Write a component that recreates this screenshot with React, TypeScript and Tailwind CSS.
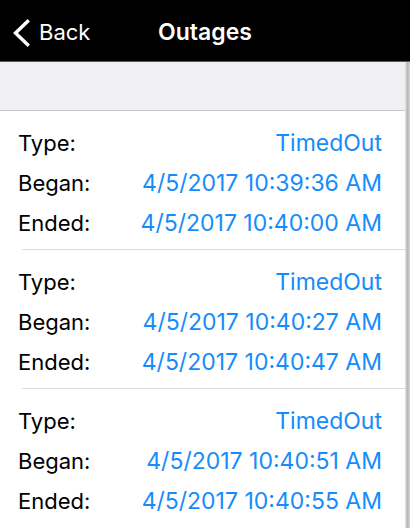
import React from "react";

const groups = [
  { type: "TimedOut", began: "4/5/2017 10:39:36 AM", ended: "4/5/2017 10:40:00 AM" },
  { type: "TimedOut", began: "4/5/2017 10:40:27 AM", ended: "4/5/2017 10:40:47 AM" },
  { type: "TimedOut", began: "4/5/2017 10:40:51 AM", ended: "4/5/2017 10:40:55 AM" },
];

function Row({ label, value }: { label: string; value: string }) {
  return (
    <div className="flex h-10 items-center justify-between">
      <span className="text-black text-[22px]">{label}</span>
      <span className="text-[#168cfb] text-[23px]">{value}</span>
    </div>
  );
}

export default function App() {
  return (
    <div
      className="w-[410px] h-[528px] overflow-hidden bg-white text-[22px]"
      style={{ fontFamily: "Inter, 'Liberation Sans', sans-serif" }}
    >
      <div className="h-[62px] pt-[4px] bg-black border-b border-[#5a5a5a] grid grid-cols-[1fr_auto_1fr] items-center">
        <div className="flex items-center pl-[11px] gap-[8px] text-white">
          <svg width="20" height="28" viewBox="0 0 20 28" fill="none">
            <path d="M16.5 2.5 L4.5 14 L16.5 25.5" stroke="white" strokeWidth="3.4" strokeLinecap="square" />
          </svg>
          <span className="text-[22px]">Back</span>
        </div>
        <div className="text-white font-semibold text-[23px]">Outages</div>
        <div />
      </div>
      <div className="flex h-[466px]">
        <div className="flex-1 flex flex-col">
          <div className="h-[49px] bg-[#efeff4] border-b border-[#c8c7cc]" />
          {groups.map((g, i) => (
            <div key={i}>
              <div className="pt-[12px] pb-[6px] pl-[18px] pr-[23px]">
                <Row label="Type:" value={g.type} />
                <Row label="Began:" value={g.began} />
                <Row label="Ended:" value={g.ended} />
              </div>
              {i < groups.length - 1 && <div className="ml-[22px] h-px bg-[#dcdcdc]" />}
            </div>
          ))}
        </div>
        <div className="w-[5px] bg-gradient-to-r from-[#e6e6e6] via-[#b8b8b8] to-[#d4d4d4]" />
      </div>
    </div>
  );
}
